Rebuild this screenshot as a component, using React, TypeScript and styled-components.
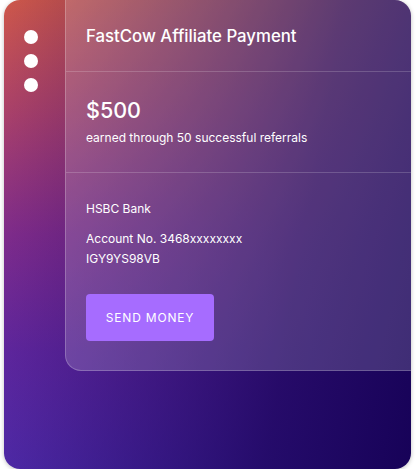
import React from "react";
import styled, { createGlobalStyle } from "styled-components";

const GlobalStyle = createGlobalStyle`
  body {
    margin: 0;
    background: #ffffff;
    font-family: Inter, "Liberation Sans", sans-serif;
  }
`;

const Card = styled.div`
  margin: 0 5px 0 4px;
  width: 407px;
  height: 469px;
  border-radius: 16px;
  overflow: hidden;
  display: flex;
  align-items: flex-start;
  box-shadow: 0 1px 4px rgba(0, 0, 0, 0.25);
  background:
    linear-gradient(100deg, rgba(23, 2, 88, 0) 0%, rgba(23, 2, 88, 0.35) 30%, rgba(23, 2, 88, 0.8) 70%, rgba(23, 2, 88, 1) 100%),
    linear-gradient(180deg, #cf584a 0%, #b0436c 25%, #8a3090 50%, #6a2ca8 75%, #5a32b8 100%);
`;

const Sidebar = styled.div`
  width: 61px;
  flex: none;
  padding: 30px 0 0 20px;
  box-sizing: border-box;
  display: flex;
  flex-direction: column;
  gap: 10px;
`;

const Dot = styled.span`
  width: 14px;
  height: 14px;
  border-radius: 50%;
  background: #ffffff;
`;

const Panel = styled.div`
  flex: 1;
  height: 371px;
  box-sizing: border-box;
  background: rgba(255, 255, 255, 0.17);
  border-left: 1px solid rgba(255, 255, 255, 0.22);
  border-bottom: 1px solid rgba(255, 255, 255, 0.22);
  border-bottom-left-radius: 16px;
  color: #ffffff;
`;

const Section = styled.div<{ $h?: number; $top?: number }>`
  padding: ${(p) => p.$top ?? 0}px 20px 0;
  ${(p) => (p.$h ? `height: ${p.$h}px;` : "")}
  box-sizing: border-box;
  display: flex;
  flex-direction: column;
  justify-content: ${(p) => (p.$h ? "center" : "flex-start")};
  border-bottom: 1px solid rgba(255, 255, 255, 0.18);
  &:last-child {
    border-bottom: none;
  }
`;

const Title = styled.div`
  font-size: 16.8px;
  font-weight: 500;
`;

const Amount = styled.div`
  font-size: 21.5px;
  font-weight: 500;
  line-height: 28px;
`;

const Text = styled.div<{ $mt?: number }>`
  font-size: 12px;
  line-height: 20px;
  margin-top: ${(p) => p.$mt ?? 0}px;
`;

const Button = styled.button`
  margin-top: 25px;
  width: 128px;
  height: 47px;
  border: none;
  border-radius: 4px;
  background: #a66cff;
  color: #ffffff;
  font-family: Inter, "Liberation Sans", sans-serif;
  font-size: 12px;
  letter-spacing: 0.8px;
  cursor: pointer;
`;

export default function App() {
  return (
    <>
      <GlobalStyle />
      <Card>
        <Sidebar>
          <Dot />
          <Dot />
          <Dot />
        </Sidebar>
        <Panel>
          <Section $h={72}>
            <Title>FastCow Affiliate Payment</Title>
          </Section>
          <Section $h={101}>
            <Amount>$500</Amount>
            <Text $mt={4}>earned through 50 successful referrals</Text>
          </Section>
          <Section $top={26}>
            <Text>HSBC Bank</Text>
            <Text $mt={10}>Account No. 3468xxxxxxxx</Text>
            <Text>IGY9YS98VB</Text>
            <Button>SEND MONEY</Button>
          </Section>
        </Panel>
      </Card>
    </>
  );
}
